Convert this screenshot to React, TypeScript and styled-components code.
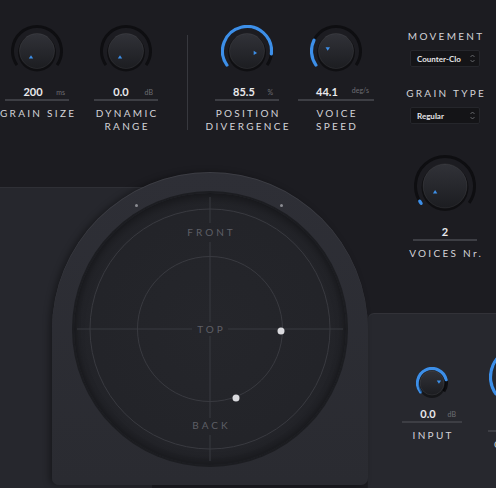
import React, { useId } from 'react'
import styled, { createGlobalStyle } from 'styled-components'

const BLUE = '#3d8fe8'

const GlobalStyle = createGlobalStyle`
  html, body {
    margin: 0;
    padding: 0;
    background: #1c1c21;
  }
  body {
    font-family: Lato, "Liberation Sans", sans-serif;
  }
`

//Screen flex
const Screen = styled.div`
  width: 496px;
  height: 488px;
  overflow: hidden;
  display: flex;
  background: #1c1c21;
`

const LeftPart = styled.div`
  width: 368px;
  flex: none;
  display: flex;
  flex-direction: column;
`

const TopKnobs = styled.div`
  height: 172px;
  box-sizing: border-box;
  padding-top: 25px;
  display: flex;
  align-items: flex-start;
`

type GroupProps = { $w: number; $ml?: number; $mt?: number }

const KnobGroup = styled.div<GroupProps>`
  width: ${({ $w }) => $w}px;
  margin-left: ${({ $ml }) => $ml || 0}px;
  margin-top: ${({ $mt }) => $mt || 0}px;
  flex: none;
  display: flex;
  flex-direction: column;
  align-items: center;

  svg {
    display: block;
  }
`

const ValueRow = styled.div<{ $pr: number }>`
  position: relative;
  width: 100%;
  box-sizing: border-box;
  margin-top: 8px;
  padding-right: ${({ $pr }) => $pr}px;
  height: 14px;
  line-height: 14px;
  text-align: center;
  font-size: 11px;
  font-weight: 700;
  color: #e9e9ec;
`

const Unit = styled.span<{ $right: number; $up?: number }>`
  position: absolute;
  right: ${({ $right }) => $right}px;
  top: ${({ $up }) => -($up || 0)}px;
  font-size: 7px;
  font-weight: 400;
  color: #6d6e74;
`

const Underline = styled.div`
  width: 100%;
  height: 2px;
  background: #3d3e44;
`

const KnobLabel = styled.div`
  margin-top: 6px;
  font-size: 10px;
  line-height: 13px;
  letter-spacing: 2.3px;
  padding-left: 2.3px;
  text-align: center;
  white-space: nowrap;
  color: #d3d3d8;
`

const Divider = styled.div`
  width: 1px;
  height: 95px;
  margin: 10px 0 0 29px;
  background: #37383e;
  flex: none;
`

const Lower = styled.div`
  flex: 1;
  display: flex;
`

const LeftPanel = styled.div`
  width: 152px;
  flex: none;
  margin-top: 15px;
  margin-right: -100px;
  background: #26272d;
  border-top: 1px solid #2f3036;
`

const Arch = styled.div`
  position: relative;
  width: 316px;
  height: 313px;
  flex: none;
  box-sizing: border-box;
  padding-top: 21px;
  display: flex;
  justify-content: center;
  align-items: flex-start;
  border-radius: 158px 158px 7px 7px;
  background: linear-gradient(#2e2f36, #2a2b31);
  box-shadow: -3px 0 6px rgba(0, 0, 0, 0.35), inset 0 1px 0 rgba(255, 255, 255, 0.07);
`

const RingDot = styled.div<{ $x: number; $y: number }>`
  position: absolute;
  left: ${({ $x }) => $x - 1.5}px;
  top: ${({ $y }) => $y - 1.5}px;
  width: 3px;
  height: 3px;
  border-radius: 50%;
  background: #8b8c92;
`

const Disk = styled.div`
  position: relative;
  width: 272px;
  height: 272px;
  border-radius: 50%;
  background: radial-gradient(circle, #25262b 0%, #232429 60%, #1f2025 100%);
  box-shadow: 0 0 0 2px #1c1d21, inset 0 4px 10px rgba(0, 0, 0, 0.35), inset 0 -6px 6px rgba(0, 0, 0, 0.18);

  svg {
    display: block;
  }
`

const PannerLabel = styled.span<{ $y: number }>`
  position: absolute;
  left: 0;
  right: 0;
  top: ${({ $y }) => $y - 6}px;
  line-height: 12px;
  text-align: center;
  font-size: 10px;
  letter-spacing: 3px;
  padding-left: 3px;
  color: #5e5f66;
`

const RightColumn = styled.div`
  width: 128px;
  flex: none;
  display: flex;
  flex-direction: column;
`

const Controls = styled.div`
  padding-left: 26px;
  display: flex;
  flex-direction: column;
  align-items: center;
`

const SectionLabel = styled.div<{ $mt: number }>`
  margin-top: ${({ $mt }) => $mt}px;
  font-size: 10px;
  line-height: 12px;
  letter-spacing: 2.3px;
  padding-left: 2.3px;
  white-space: nowrap;
  color: #d3d3d8;
`

const Select = styled.div`
  margin-top: 8px;
  width: 70px;
  height: 17px;
  box-sizing: border-box;
  padding: 0 3px 0 6px;
  display: flex;
  align-items: center;
  justify-content: space-between;
  background: #141417;
  border: 1px solid #25262b;
  border-radius: 2px;
  font-size: 8px;
  font-weight: 700;
  color: #e4e4e7;

  span {
    white-space: nowrap;
  }
`

const RightPanel = styled.div`
  margin-top: auto;
  height: 175px;
  box-sizing: border-box;
  padding-left: 34px;
  display: flex;
  align-items: flex-start;
  background: #27282e;
  border-top-left-radius: 6px;
  box-shadow: inset 0 1px 0 rgba(255, 255, 255, 0.05), -1px 0 0 #1e1f23;
`

const arc = (c: number, r: number, a0: number, a1: number) => {
  const p = (a: number) => [c + r * Math.sin((a * Math.PI) / 180), c - r * Math.cos((a * Math.PI) / 180)]
  const [x0, y0] = p(a0)
  const [x1, y1] = p(a1)
  return `M ${x0} ${y0} A ${r} ${r} 0 ${a1 - a0 > 180 ? 1 : 0} 1 ${x1} ${y1}`
}

type KnobProps = {
  r: number
  inner: number
  fill?: [number, number]
  pointer: number
  pd: number
  dir: 'up' | 'down' | 'right' | 'left'
}

const Knob = ({ r, inner, fill, pointer, pd, dir }: KnobProps) => {
  const id = 'k' + useId().replace(/[^a-zA-Z0-9]/g, '')
  const tr = r - 1.5
  const rot = { up: 0, right: 90, down: 180, left: 270 }[dir]
  const a = (pointer * Math.PI) / 180
  const px = r + pd * Math.sin(a)
  const py = r - pd * Math.cos(a)
  return (
    <svg width={r * 2} height={r * 2} viewBox={`0 0 ${r * 2} ${r * 2}`}>
      <defs>
        <linearGradient id={id} x1="0" y1="0" x2="0" y2="1">
          <stop offset="0" stopColor="#313238" />
          <stop offset="1" stopColor="#1c1d21" />
        </linearGradient>
      </defs>
      <path d={arc(r, tr, -125, 125)} stroke="#0e0e11" strokeWidth={3} fill="none" />
      {fill && (
        <path d={arc(r, tr, fill[0], fill[1])} stroke={BLUE} strokeWidth={3.2} strokeLinecap="round" fill="none" />
      )}
      <circle cx={r} cy={r + 1.5} r={inner + 1.5} fill="rgba(0,0,0,0.45)" />
      <circle cx={r} cy={r} r={inner} fill={`url(#${id})`} stroke="rgba(255,255,255,0.07)" strokeWidth={1} />
      <polygon points="0,-1.8 2.2,1.6 -2.2,1.6" fill={BLUE} transform={`translate(${px} ${py}) rotate(${rot})`} />
    </svg>
  )
}

const Chevrons = () => (
  <svg width="7" height="11" viewBox="0 0 7 11">
    <path d="M1.5 4 L3.5 2 L5.5 4" stroke="#77787e" strokeWidth="0.8" fill="none" />
    <path d="M1.5 7 L3.5 9 L5.5 7" stroke="#77787e" strokeWidth="0.8" fill="none" />
  </svg>
)

const Panner = () => (
  <svg width="272" height="272" viewBox="0 0 272 272">
    <g stroke="#393a40" strokeWidth="1" fill="none">
      <circle cx="136" cy="136" r="120" />
      <circle cx="136" cy="136" r="72.5" />
      <path d="M136 4 V30 M136 49 V129 M136 143 V225 M136 242 V268" />
      <path d="M3 136 H118 M154 136 H269" />
    </g>
    <circle cx="207" cy="138" r="3.5" fill="#dadade" />
    <circle cx="162" cy="205" r="3.5" fill="#dadade" />
  </svg>
)

export default function App() {
  return (
    <>
      <GlobalStyle />
      <Screen>
        <LeftPart>
          <TopKnobs>
            <KnobGroup $w={64} $ml={5}>
              <Knob r={26} inner={17.5} pointer={-135} pd={8.5} dir="up" />
              <ValueRow $pr={8}>
                200<Unit $right={4}>ms</Unit>
              </ValueRow>
              <Underline />
              <KnobLabel>GRAIN SIZE</KnobLabel>
            </KnobGroup>
            <KnobGroup $w={64} $ml={25}>
              <Knob r={26} inner={17.5} pointer={-135} pd={8.5} dir="up" />
              <ValueRow $pr={10}>
                0.0<Unit $right={5}>dB</Unit>
              </ValueRow>
              <Underline />
              <KnobLabel>
                DYNAMIC
                <br />
                RANGE
              </KnobLabel>
            </KnobGroup>
            <Divider />
            <KnobGroup $w={64} $ml={27}>
              <Knob r={26} inner={17.5} fill={[-125, 97]} pointer={103} pd={8.5} dir="right" />
              <ValueRow $pr={6}>
                85.5<Unit $right={6}>%</Unit>
              </ValueRow>
              <Underline />
              <KnobLabel>
                POSITION
                <br />
                DIVERGENCE
              </KnobLabel>
            </KnobGroup>
            <KnobGroup $w={76} $ml={19}>
              <Knob r={26} inner={17.5} fill={[-125, -64]} pointer={-76} pd={8.5} dir="down" />
              <ValueRow $pr={18}>
                44.1<Unit $right={5} $up={2}>deg/s</Unit>
              </ValueRow>
              <Underline />
              <KnobLabel>
                VOICE
                <br />
                SPEED
              </KnobLabel>
            </KnobGroup>
          </TopKnobs>
          <Lower>
            <LeftPanel />
            <Arch>
              <RingDot $x={84} $y={33} />
              <RingDot $x={229} $y={33} />
              <Disk>
                <Panner />
                <PannerLabel $y={39}>FRONT</PannerLabel>
                <PannerLabel $y={136}>TOP</PannerLabel>
                <PannerLabel $y={232}>BACK</PannerLabel>
              </Disk>
            </Arch>
          </Lower>
        </LeftPart>
        <RightColumn>
          <Controls>
            <SectionLabel $mt={30}>MOVEMENT</SectionLabel>
            <Select>
              <span>Counter-Clo</span>
              <Chevrons />
            </Select>
            <SectionLabel $mt={20}>GRAIN TYPE</SectionLabel>
            <Select>
              <span>Regular</span>
              <Chevrons />
            </Select>
            <KnobGroup $w={64} $mt={31}>
              <Knob r={31} inner={22} fill={[-126, -121]} pointer={-121} pd={11.5} dir="up" />
              <ValueRow $pr={0}>2</ValueRow>
              <Underline />
              <KnobLabel>VOICES Nr.</KnobLabel>
            </KnobGroup>
          </Controls>
          <RightPanel>
            <KnobGroup $w={60} $mt={54}>
              <Knob r={16} inner={12} fill={[-128, 77]} pointer={82} pd={7} dir="down" />
              <ValueRow $pr={8}>
                0.0<Unit $right={6}>dB</Unit>
              </ValueRow>
              <Underline />
              <KnobLabel>INPUT</KnobLabel>
            </KnobGroup>
            <KnobGroup $w={64} $ml={26} $mt={33}>
              <Knob r={31} inner={22} fill={[-125, 110]} pointer={110} pd={11.5} dir="right" />
              <ValueRow $pr={0} />
              <Underline />
              <KnobLabel>OUTPUT</KnobLabel>
            </KnobGroup>
          </RightPanel>
        </RightColumn>
      </Screen>
    </>
  )
}
